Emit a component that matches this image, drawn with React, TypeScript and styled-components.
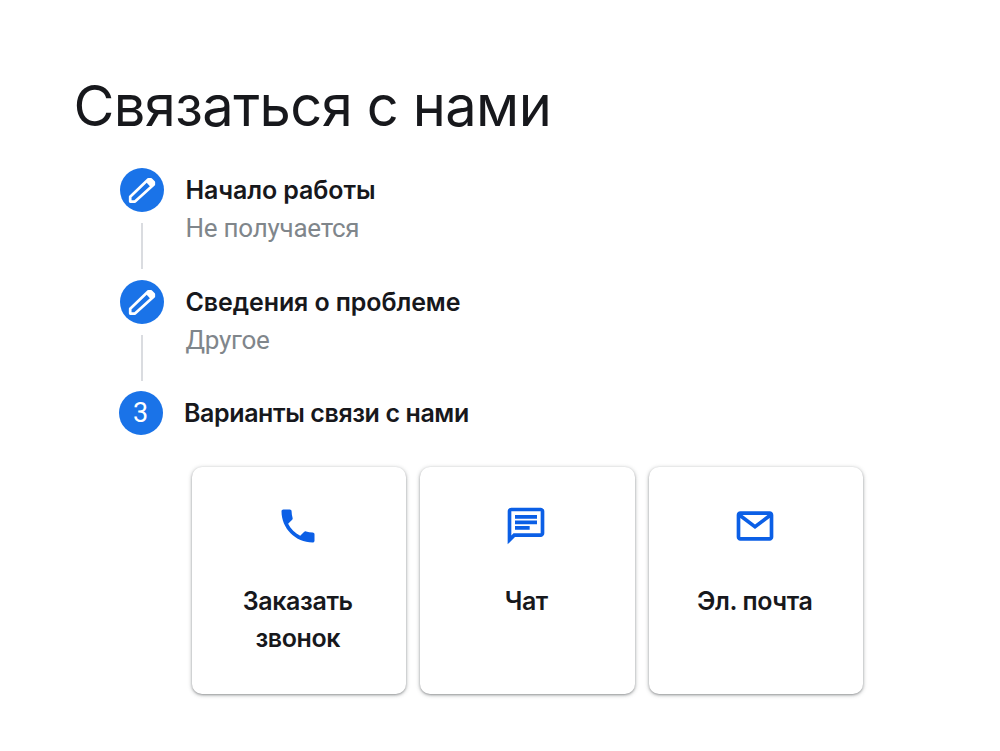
import styled, { createGlobalStyle } from 'styled-components';

const GlobalStyle = createGlobalStyle`
  * {
    box-sizing: border-box;
  }

  body {
    margin: 0;
    background-color: #fff;
    color: #17181c;
    font-family: Inter, 'Open Sans', sans-serif;
  }
`;

const Page = styled.main`
  width: 1000px;
  height: 751px;
  padding: 72px 0 0 74.5px;
  overflow: hidden;
`;

const PageTitle = styled.h1`
  margin: 0 0 0 -1px;
  height: 96px;
  font-size: 56px;
  line-height: 68px;
  font-weight: 400;
  letter-spacing: -0.6px;
  word-spacing: -0.5px;
  white-space: nowrap;
`;

const StepList = styled.ol`
  margin: 0;
  padding: 0 0 0 44px;
  list-style: none;
`;

const Step = styled.li<{ $current?: boolean }>`
  display: flex;
  gap: 21.5px;
  height: ${({ $current }) => ($current ? '44px' : '111.5px')};
  padding-left: ${({ $current }) => ($current ? '0' : '1.5px')};
`;

const StepMarker = styled.div`
  display: flex;
  flex-direction: column;
  align-items: center;
  width: 44px;
`;

const StepCircle = styled.div`
  display: flex;
  align-items: center;
  justify-content: center;
  flex: none;
  width: 44px;
  height: 44px;
  border-radius: 50%;
  background-color: #1a73e8;
  color: #fff;
  font-family: Roboto, sans-serif;
  font-size: 27px;
`;

const StepLine = styled.div`
  width: 2px;
  height: 46px;
  margin: 11px 1px 0 0;
  background-color: #dadce0;
`;

const StepTitle = styled.h2<{ $tight?: boolean }>`
  margin: 0;
  font-size: 25px;
  line-height: 44px;
  font-weight: 600;
  letter-spacing: ${({ $tight }) => ($tight ? '-0.4px' : '-0.1px')};
  white-space: nowrap;
`;

const StepAnswer = styled.p`
  margin: 0;
  color: #80868b;
  font-family: Roboto, sans-serif;
  font-size: 26px;
  line-height: 32px;
  letter-spacing: -0.25px;
  white-space: nowrap;
`;

const OptionList = styled.div`
  display: flex;
  gap: 14px;
  margin: 32px 0 0 117px;
`;

const OptionCard = styled.button`
  display: flex;
  flex-direction: column;
  align-items: center;
  width: 214.5px;
  height: 227px;
  padding: 37px 20px 0;
  border: none;
  border-radius: 10px;
  background-color: #fff;
  box-shadow: 0 1px 4px rgba(60, 64, 67, 0.4), 0 1px 2px rgba(60, 64, 67, 0.3);
  color: inherit;
  font-family: inherit;
  cursor: pointer;

  svg {
    margin-right: 2px;
  }
`;

const OptionLabel = styled.span`
  margin: 35px 2px 0 0;
  font-size: 25px;
  line-height: 37px;
  font-weight: 600;
  letter-spacing: -0.4px;
`;

const PencilIcon = () => (
  <svg width="44" height="44" viewBox="0 0 44 44" fill="none">
    <path
      d="M10.2 33.6v-4.8L28.4 11.3h2.4l3 3v2.2L15 33.6z"
      stroke="#fff"
      strokeWidth="2.7"
      strokeLinejoin="round"
    />
    <path d="M26 14l3.5-3.2 4.9 4.6-3.6 3.8z" fill="#fff" />
  </svg>
);

const options = [
  {
    label: 'Заказать звонок',
    path: 'M6.62 10.79c1.44 2.83 3.76 5.14 6.59 6.59l2.2-2.2c.27-.27.67-.36 1.02-.24 1.12.37 2.33.57 3.57.57.55 0 1 .45 1 1V20c0 .55-.45 1-1 1-9.39 0-17-7.61-17-17 0-.55.45-1 1-1h3.5c.55 0 1 .45 1 1 0 1.25.2 2.45.57 3.57.11.35.03.74-.25 1.02l-2.2 2.2z'
  },
  {
    label: 'Чат',
    path: 'M4 4h16v12H5.17L4 17.17V4m0-2c-1.1 0-1.99.9-1.99 2L2 22l4-4h14c1.1 0 2-.9 2-2V4c0-1.1-.9-2-2-2H4zm2 10h8v2H6v-2zm0-3h12v2H6V9zm0-3h12v2H6V6z'
  },
  {
    label: 'Эл. почта',
    path: 'M22 6c0-1.1-.9-2-2-2H4c-1.1 0-2 .9-2 2v12c0 1.1.9 2 2 2h16c1.1 0 2-.9 2-2V6zM4 18V7.6l8 6.1 8-6.1V18H4zM5.200 6h13.600L12 11.200z'
  }
];

const steps = [
  { title: 'Начало работы', answer: 'Не получается' },
  { title: 'Сведения о проблеме', answer: 'Другое' }
];

const App = () => {
  return (
    <Page>
      <GlobalStyle />
      <PageTitle>Связаться с нами</PageTitle>

      <StepList>
        {steps.map((step) => (
          <Step key={step.title}>
            <StepMarker>
              <StepCircle>
                <PencilIcon />
              </StepCircle>
              <StepLine />
            </StepMarker>
            <div>
              <StepTitle>{step.title}</StepTitle>
              <StepAnswer>{step.answer}</StepAnswer>
            </div>
          </Step>
        ))}
        <Step $current>
          <StepCircle>3</StepCircle>
          <StepTitle $tight>Варианты связи с нами</StepTitle>
        </Step>
      </StepList>

      <OptionList>
        {options.map((option) => (
          <OptionCard key={option.label} type="button">
            <svg width="44" height="44" viewBox="0 0 24 24" fill="#0b5fe6" fillRule="evenodd">
              <path d={option.path} />
            </svg>
            <OptionLabel>{option.label}</OptionLabel>
          </OptionCard>
        ))}
      </OptionList>
    </Page>
  );
};

export default App;
